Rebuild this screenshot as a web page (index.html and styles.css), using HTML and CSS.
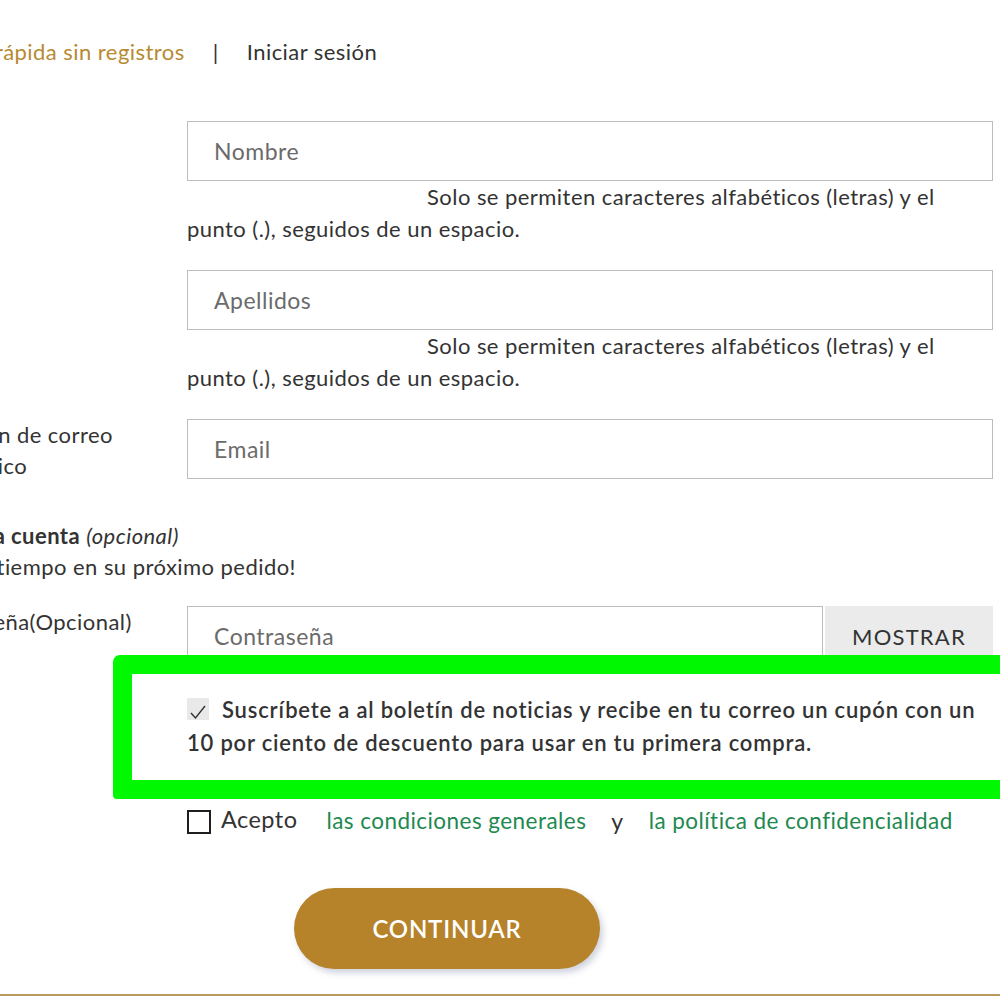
FILE: index.html
```html
<!DOCTYPE html>
<html lang="es">
<head>
    <meta charset="UTF-8">
    <meta name="viewport" content="width=device-width, initial-scale=1.0">
    <title>Datos personales</title>
    <link rel="stylesheet" href="styles.css">
</head>
<body>

    <div class="page">
        <nav class="topnav">
            <a class="quick" href="#">Compra rápida sin registros</a>
            <span class="sep">|</span>
            <a class="login" href="#">Iniciar sesión</a>
        </nav>

        <form class="checkout" id="customerForm">
            <div class="field">
                <label class="field-label" for="firstname"></label>
                <div class="field-body">
                    <input type="text" id="firstname" name="firstname" placeholder="Nombre">
                    <p class="help">Solo se permiten caracteres alfabéticos (letras) y el punto (.), seguidos de un espacio.</p>
                </div>
            </div>

            <div class="field">
                <label class="field-label" for="lastname"></label>
                <div class="field-body">
                    <input type="text" id="lastname" name="lastname" placeholder="Apellidos">
                    <p class="help">Solo se permiten caracteres alfabéticos (letras) y el punto (.), seguidos de un espacio.</p>
                </div>
            </div>

            <div class="field">
                <label class="field-label" for="email">Dirección de correo electrónico</label>
                <div class="field-body">
                    <input type="email" id="email" name="email" placeholder="Email">
                </div>
            </div>

            <div class="account-note">
                <p><strong>Crea una cuenta</strong> <em>(opcional)</em></p>
                <p>¡Ahorre tiempo en su próximo pedido!</p>
            </div>

            <div class="field field-password">
                <label class="field-label" for="password">Contraseña(Opcional)</label>
                <div class="field-body">
                    <div class="pw-group">
                        <input type="password" id="password" name="password" placeholder="Contraseña">
                        <button type="button" class="show-btn">MOSTRAR</button>
                    </div>
                </div>
            </div>

            <div class="field field-newsletter">
                <div class="field-label"></div>
                <div class="field-body newsletter">
                    <span class="highlight"></span>
                    <label class="newsletter-label">
                        <span class="check checked">
                            <svg width="18" height="16" viewBox="0 0 18 16"><path d="M2 9 L6.5 14 L16 2" fill="none" stroke="#333" stroke-width="1.4"/></svg>
                        </span>Suscríbete a al boletín de noticias y recibe en tu correo un cupón con un 10 por ciento de descuento para usar en tu primera compra.
                    </label>
                </div>
            </div>

            <div class="field field-terms">
                <div class="field-label"></div>
                <div class="field-body terms">
                    <span class="check box"></span>
                    <span class="terms-text">Acepto</span>
                    <a class="terms-link first" href="#">las condiciones generales</a>
                    <span class="terms-and">y</span>
                    <a class="terms-link" href="#">la política de confidencialidad</a>
                </div>
            </div>

            <div class="actions">
                <button type="button" class="continue-btn">CONTINUAR</button>
            </div>
        </form>
    </div>
    <div class="footer-line"></div>

</body>
</html>
```

FILE: styles.css
```css
body {
    font-family: Lato, "Open Sans", sans-serif;
    font-size: 22px;
    letter-spacing: 0.45px;
    color: #333;
    margin: 0;
    padding: 0;
    background-color: #fff;
    overflow: hidden;
}
p {
    margin: 0;
}
a {
    text-decoration: none;
}
.page {
    margin-left: -85px;
    width: 1078px;
}
.topnav {
    display: flex;
    align-items: center;
    margin-left: -5px;
    padding-top: 36px;
    line-height: 32px;
}
.quick {
    color: #b68a31;
}
.sep {
    margin: 0 28px 0 28px;
    color: #333;
}
.login {
    color: #333;
}
.checkout {
    margin-top: 53px;
}
.field {
    display: grid;
    grid-template-columns: 215px 806px;
    column-gap: 57px;
    margin-top: 25px;
}
.field:first-child {
    margin-top: 0;
}
.field-label {
    line-height: 31px;
}
input[type="text"],
input[type="email"],
input[type="password"] {
    display: block;
    box-sizing: border-box;
    width: 100%;
    height: 60px;
    padding: 0 26px;
    border: 1px solid #bdbdbd;
    font-family: inherit;
    font-size: 23px;
    letter-spacing: 0.5px;
    color: #333;
    outline: none;
}
input::placeholder {
    color: #6b6b6b;
}
.help {
    text-indent: 240px;
    line-height: 32px;
}
.account-note {
    margin-top: 39px;
    line-height: 31px;
}
.account-note p {
    height: 31px;
}
.account-note strong {
    font-weight: 700;
}
.field-password {
    margin-top: 24px;
}
.field-password .field-label {
    line-height: 32px;
}
.pw-group {
    display: flex;
    gap: 2px;
}
.pw-group input {
    flex: 1;
}
.show-btn {
    width: 168px;
    height: 60px;
    border: none;
    background-color: #ebebeb;
    font-family: inherit;
    font-size: 22px;
    letter-spacing: 1.2px;
    color: #333;
}
.field-newsletter {
    margin-top: 27px;
}
.newsletter {
    position: relative;
}
.highlight {
    position: absolute;
    left: -74px;
    top: -38px;
    right: -40px;
    bottom: -40px;
    border: 19px solid #00f900;
    border-radius: 7px 0 0 4px;
    pointer-events: none;
}
.newsletter-label {
    display: block;
    font-weight: 600;
    line-height: 33px;
    letter-spacing: 0.8px;
}
.check {
    display: inline-flex;
    align-items: center;
    justify-content: center;
    box-sizing: border-box;
    vertical-align: middle;
}
.check.checked {
    width: 22px;
    height: 22px;
    margin: -6px 13px 0 0;
    background-color: #e9e9e9;
}
.check.checked svg {
    margin-top: 6px;
}
.field-terms {
    margin-top: 46px;
}
.terms {
    display: flex;
    align-items: center;
    line-height: 32px;
}
.check.box {
    width: 24px;
    height: 24px;
    border: 2px solid #1e1e1e;
    margin-top: 2px;
}
.terms-text {
    margin-left: 10px;
    margin-top: -5px;
    font-size: 23.5px;
}
.terms-link {
    color: #21894f;
    font-size: 22.5px;
}
.terms-link.first {
    margin-left: 29px;
}
.terms-and {
    margin: 0 25px;
    font-size: 23px;
}
.actions {
    margin-top: 51px;
    padding-left: 379px;
}
.continue-btn {
    width: 306px;
    height: 81px;
    border: none;
    border-radius: 41px;
    background-color: #b6822a;
    color: #fff;
    font-family: inherit;
    font-size: 24px;
    font-weight: 600;
    letter-spacing: 0.8px;
    box-shadow: 3px 4px 6px rgba(120, 130, 160, 0.35);
    cursor: pointer;
}
.footer-line {
    margin-top: 25px;
    height: 2px;
    background-color: #b89a5e;
}
```
